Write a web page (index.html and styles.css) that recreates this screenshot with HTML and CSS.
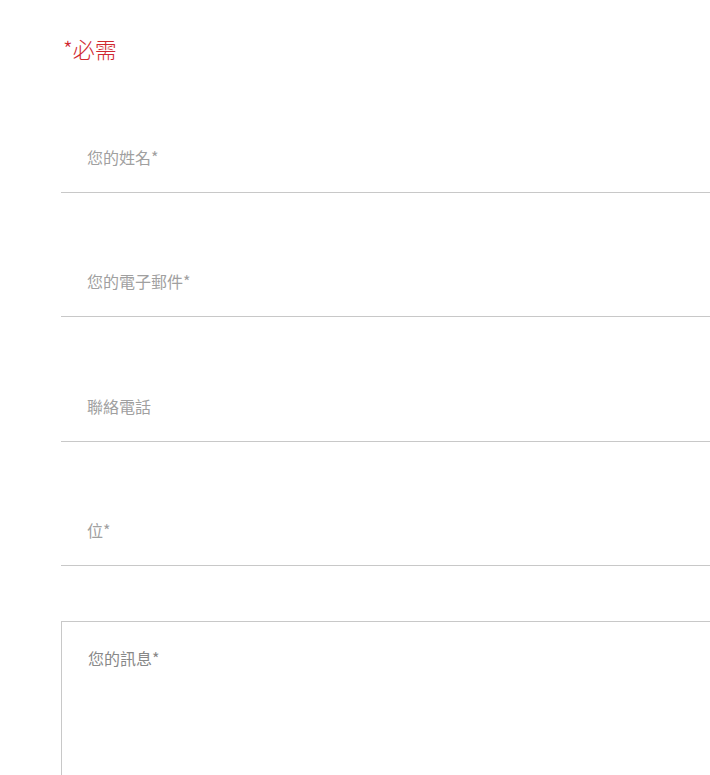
FILE: index.html
```html
<!DOCTYPE html>
<html lang="zh-Hant">
<head>
    <meta charset="UTF-8">
    <meta name="viewport" content="width=device-width, initial-scale=1.0">
    <title>聯絡我們</title>
    <link rel="stylesheet" href="styles.css">
</head>
<body>
    <div class="form-wrap">
        <p class="required-note">*必需</p>
        <form class="contact-form">
            <input class="line-field" type="text" placeholder="您的姓名*">
            <input class="line-field" type="email" placeholder="您的電子郵件*">
            <input class="line-field" type="tel" placeholder="聯絡電話">
            <input class="line-field" type="text" placeholder="位*">
            <textarea class="box-field" placeholder="您的訊息*"></textarea>
        </form>
    </div>
</body>
</html>
```

FILE: styles.css
```css
html, body {
    margin: 0;
    height: 100%;
    background: white;
    overflow: hidden;
}
.form-wrap {
    padding: 0 0 0 61px;
    overflow: hidden;
}
.form-wrap * {
    font-family: "Noto Sans CJK TC", "Noto Sans", sans-serif;
    box-sizing: border-box;
}
.required-note {
    margin: 34px 0 0 2px;
    font-size: 22px;
    line-height: 28px;
    font-weight: 300;
    color: rgb(208, 40, 48);
}
.contact-form {
    display: flex;
    flex-direction: column;
    gap: 53.34px;
    margin-top: 60px;
}
.line-field {
    display: block;
    width: 100%;
    height: 71px;
    margin: 0;
    padding: 0 0 0 26px;
    border: none;
    border-bottom: 1px solid rgb(200, 200, 200);
    outline: none;
    font-size: 16px;
    color: #555;
    background: transparent;
}
.line-field::placeholder {
    color: rgb(160, 160, 160);
}
.box-field {
    display: block;
    width: calc(100% + 20px);
    height: 200px;
    margin: 2px 0 0 0;
    padding: 24px 26px;
    border: 1px solid rgb(200, 200, 200);
    outline: none;
    resize: none;
    font-size: 16px;
    line-height: 24px;
    color: #555;
}
.box-field::placeholder {
    color: rgb(136, 136, 136);
}
```
